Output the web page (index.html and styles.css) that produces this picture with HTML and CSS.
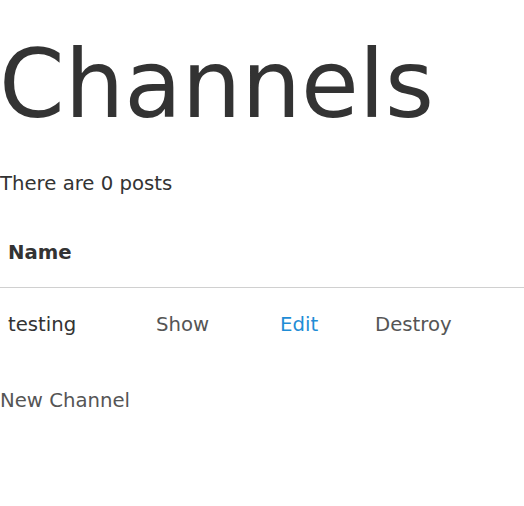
FILE: index.html
```html
<!DOCTYPE html>
<html>
<head>
<meta charset="utf-8">
<link rel="stylesheet" href="styles.css">
</head>
<body>
<h1 class="title">Channels</h1>
<p class="count">There are 0 posts</p>
<table class="channels">
  <thead>
    <tr><th class="c-name">Name</th><th class="c-show"></th><th class="c-edit"></th><th class="c-destroy"></th></tr>
  </thead>
  <tbody>
    <tr>
      <td>testing</td>
      <td><a class="link" href="#">Show</a></td>
      <td><a class="link link-edit" href="#">Edit</a></td>
      <td><a class="link" href="#">Destroy</a></td>
    </tr>
  </tbody>
</table>
<a class="link new" href="#">New Channel</a>
</body>
</html>
```
FILE: styles.css
```css
html, body {
  margin: 0;
  padding: 0;
  background: #fff;
}
body {
  font-family: "DejaVu Sans", Verdana, sans-serif;
  font-size: 19.7px;
  color: #333;
}
.title {
  font-size: 94px;
  font-weight: normal;
  margin: 30px 0 0 -1px;
  line-height: 1.164;
}
.count {
  margin: 33px 0 0 0;
}
.channels {
  width: 100%;
  border-collapse: collapse;
  margin-top: 22px;
}
.channels th, .channels td {
  text-align: left;
  padding: 24px 8px;
}
.channels th {
  font-weight: bold;
  padding-bottom: 23px;
  border-bottom: 1px solid #d0d0d0;
}
.channels td {
  padding-top: 25px;
}
.c-name { width: 132px; }
.c-show { width: 108px; }
.c-edit { width: 79px; }
.link {
  color: #555;
  text-decoration: none;
}
.link-edit {
  color: #1f8dd6;
}
.new {
  display: block;
  margin-top: 29px;
}
```
